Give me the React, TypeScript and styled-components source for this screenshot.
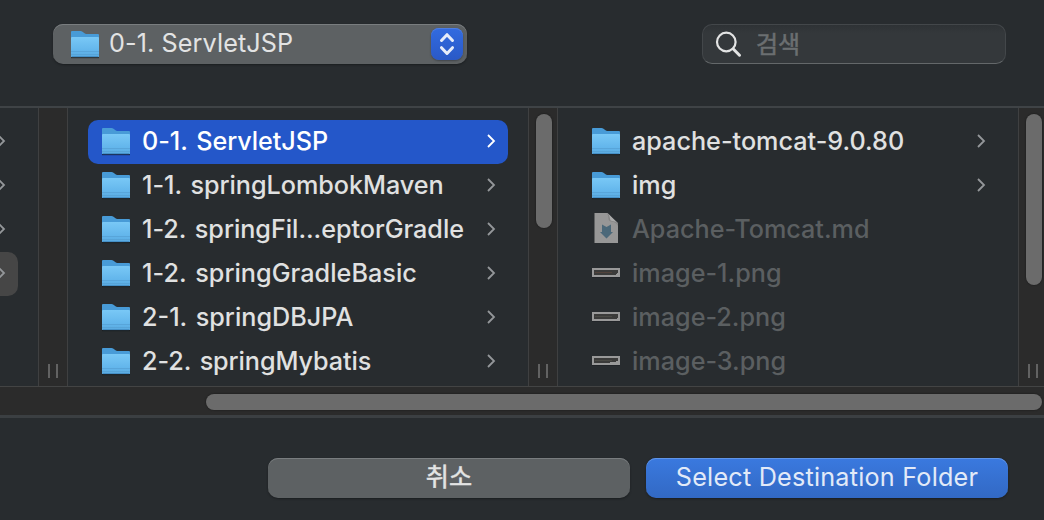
import React from "react";
import styled, { createGlobalStyle, css } from "styled-components";

const Global = createGlobalStyle`
  * { box-sizing: border-box; }
  body { margin: 0; background: #282c2f; overflow: hidden; }
`;

const Dialog = styled.main`
  width: 1044px;
  height: 520px;
  display: flex;
  flex-direction: column;
  background: #282c2f;
  color: #e0e1e1;
  font-family: Inter, "Noto Sans CJK KR", sans-serif;
  font-size: 25.2px;
  line-height: 40px;
  white-space: nowrap;
  overflow: hidden;
`;

const Header = styled.header`
  height: 108px;
  flex: none;
  display: flex;
  justify-content: space-between;
  align-items: flex-start;
  padding: 24px 38px 0 53px;
  border-bottom: 2px solid #3f4346;
`;

const PopupButton = styled.button`
  width: 414px;
  height: 40px;
  display: flex;
  align-items: center;
  padding: 0 4px 0 17px;
  border: 0;
  border-radius: 10px;
  background: #5d6163;
  box-shadow: inset 0 1px #797d7f, 0 1px 2px #1b1e20;
  color: #e2e3e3;
  font: inherit;
`;

const Stepper = styled.span`
  width: 32px;
  height: 32px;
  margin-left: auto;
  border-radius: 8px;
  background: linear-gradient(#326be0, #2a59c6);
  box-shadow: inset 0 1px #4d7de2, 0 1px 2px #414548;
  display: flex;
`;

const SearchField = styled.div`
  width: 304px;
  height: 40px;
  display: flex;
  align-items: center;
  padding-left: 12px;
  gap: 13px;
  border: 1px solid #43474a;
  border-bottom-color: #64686a;
  border-radius: 10px;
  background: linear-gradient(#2e3235, #34383b 8px);
  color: #6b6f71;
  font-size: 24px;
`;

const Browser = styled.section`
  height: 278px;
  flex: none;
  display: flex;
`;

const Column = styled.div<{ $width: number; $first?: boolean }>`
  width: ${(p) => p.$width}px;
  flex: none;
  padding: 12px 20px 0 ${(p) => (p.$first ? 0 : 20)}px;
`;

const Gutter = styled.div`
  width: 30px;
  flex: none;
  display: flex;
  flex-direction: column;
  align-items: center;
  padding: 6px 0 8px;
  background: #2b2b2b;
  border: solid #3f4041;
  border-width: 0 1px;
`;

const VerticalThumb = styled.div<{ $height: number }>`
  width: 16px;
  height: ${(p) => p.$height}px;
  margin-left: 2px;
  border-radius: 8px;
  background: #6b6b6b;
  box-shadow: 0 0 1px 1px #242424;
`;

const Grip = styled.div`
  width: 10px;
  height: 14px;
  margin-top: auto;
  border: solid #626262;
  border-width: 0 2px;
`;

const Row = styled.div<{ $selected?: boolean; $dim?: boolean }>`
  height: 44px;
  display: flex;
  align-items: center;
  padding: 0 12px 0 13px;
  border-radius: 10px;
  font-weight: 500;
  word-spacing: 2px;
  ${(p) =>
    p.$selected &&
    css`
      background: #2457c9;
      color: #fff;
    `}
  ${(p) => p.$dim && css`color: #5b5f61;`}
`;

const ParentRow = styled.div<{ $active?: boolean }>`
  width: 18px;
  height: 44px;
  display: flex;
  align-items: center;
  padding-bottom: 2px;
  border-radius: 0 10px 10px 0;
  background: ${(p) => (p.$active ? "#464646" : "transparent")};
`;

const IconSlot = styled.span<{ $lowered?: boolean }>`
  width: 30px;
  height: 44px;
  margin-right: 11px;
  flex: none;
  display: flex;
  ${(p) =>
    p.$lowered &&
    css`
      margin-top: 2px;
      margin-right: 9px;
    `}
`;

const Label = styled.span<{ $spacing?: number; $weight?: number }>`
  padding-bottom: 2px;
  letter-spacing: ${(p) => p.$spacing ?? 0}px;
  font-weight: ${(p) => p.$weight ?? "inherit"};
`;

const KoreanLabel = styled(Label)`
  -webkit-text-stroke: 0.5px currentColor;
`;

const Placeholder = styled(KoreanLabel)`
  padding: 2px 0 0;
`;

const ChevronIcon = styled.svg<{ $selected?: boolean }>`
  width: 10px;
  height: 16px;
  margin-left: auto;
  margin-bottom: 2px;
  flex: none;
  fill: none;
  stroke: ${(p) => (p.$selected ? "#fff" : "#94979a")};
  stroke-width: 1.8;
`;

const HorizontalTrack = styled.div`
  height: 32px;
  flex: none;
  display: flex;
  justify-content: flex-end;
  padding: 7px 2px 0;
  background: #2b2b2b;
  border-top: 1px solid #434444;
  border-bottom: 3px solid #3b3f42;
`;

const HorizontalThumb = styled.div`
  width: 836px;
  height: 16px;
  border-radius: 8px;
  background: #6b6b6b;
  box-shadow: 0 0 1px 1px #242424;
`;

const Footer = styled.footer`
  display: flex;
  justify-content: flex-end;
  gap: 16px;
  padding: 40px 36px 0 0;
`;

const ActionButton = styled.button<{ $primary?: boolean }>`
  width: 362px;
  height: 40px;
  display: flex;
  align-items: center;
  justify-content: center;
  padding: 0;
  border: 0;
  border-radius: 10px;
  font: inherit;
  color: ${(p) => (p.$primary ? "#e2eaf8" : "#e3e4e4")};
  background: ${(p) => (p.$primary ? "linear-gradient(#3a79df, #3269c4)" : "#5d6163")};
  box-shadow: inset 0 1px ${(p) => (p.$primary ? "#6095e8" : "#797d7f")}, 0 1px 2px #1b1e20;
`;

function Folder() {
  return (
    <svg width="30" height="44" viewBox="0 0 30 44">
      <defs>
        <linearGradient id="folderFront" x1="0" y1="0" x2="0" y2="1">
          <stop offset="0" stopColor="#79c8f6" />
          <stop offset="0.7" stopColor="#62b5eb" />
          <stop offset="1" stopColor="#5aaae0" />
        </linearGradient>
      </defs>
      <path d="M1 34h28v1.2H1z" fill="#15191c" opacity=".65" />
      <path d="M1 9q0-1 1-1h8.500q1 0 2 .8l2 1.500q.8.7 1.800.7H28q1 0 1 1v21q0 1-1 1H2q-1 0-1-1z" fill="#489bd7" />
      <path d="M1 15q0-1 1-1h26q1 0 1 1v18q0 1-1 1H2q-1 0-1-1z" fill="url(#folderFront)" />
      <path d="M1 28.500h28M1 31.500h28" stroke="#549fd2" strokeWidth=".7" />
      <path d="M2 33.600h26" stroke="#3d86bb" strokeWidth=".8" />
    </svg>
  );
}

function MarkdownFile() {
  return (
    <svg width="30" height="44" viewBox="0 0 30 44">
      <path d="M3.500 5h13L27 15.500V35H3.500z" fill="#979797" />
      <path d="M15.500 5q2 1.500 2 5.500 0 3 3 3 4 0 6.500 4.500v-3z" fill="#858585" />
      <path d="M16.500 5L27 15.500q-2-2.500-5.500-2.500-2.500 0-2.500-2.500 0-3.500-2.500-5.500z" fill="#aaa" />
      <path d="M11 16.500l4.500 2.500 4.500-2.500v7.500h2l-6.500 6.500L9 24h2z" fill="#4b6879" />
    </svg>
  );
}

function ImageFile({ variant }: { variant: number }) {
  return (
    <svg width="30" height="44" viewBox="0 0 30 44">
      <path d="M1 16h28v10H1z" fill="#1b1f22" opacity=".55" />
      <path d="M1 16h28v9H1z" fill="#999" />
      <path d="M3 18h24v5H3z" fill="#3b3b3a" />
      <path d="M4 20.500h17" stroke={variant === 1 ? "#51423b" : "#4a4a45"} strokeWidth="1" />
      {variant === 1 && <path d="M25 22h1v-1h1v2h-2z" fill="#999" />}
      {variant === 2 && <path d="M26 22h1v1h-1z" fill="#999" />}
      {variant === 3 && <path d="M19 22h6v-1h2v2h-8z" fill="#999" />}
    </svg>
  );
}

function Chevron({ selected }: { selected?: boolean }) {
  return (
    <ChevronIcon $selected={selected} viewBox="0 0 10 16">
      <path d="M2 2l6 6-6 6" />
    </ChevronIcon>
  );
}

const projects = [
  { name: "0-1. ServletJSP", spacing: -0.05 },
  { name: "1-1. springLombokMaven", spacing: -0.04 },
  { name: "1-2. springFil...eptorGradle", spacing: -0.03 },
  { name: "1-2. springGradleBasic", spacing: 0.04 },
  { name: "2-1. springDBJPA", spacing: 0 },
  { name: "2-2. springMybatis", spacing: -0.08 },
];

const files = [
  { name: "apache-tomcat-9.0.80", icon: <Folder />, folder: true },
  { name: "img", icon: <Folder />, folder: true },
  { name: "Apache-Tomcat.md", icon: <MarkdownFile /> },
  { name: "image-1.png", icon: <ImageFile variant={1} /> },
  { name: "image-2.png", icon: <ImageFile variant={2} /> },
  { name: "image-3.png", icon: <ImageFile variant={3} /> },
];

export default function App() {
  return (
    <>
      <Global />
      <Dialog>
        <Header>
          <PopupButton>
            <IconSlot $lowered>
              <Folder />
            </IconSlot>
            <Label $weight={430} $spacing={0.1}>0-1. ServletJSP</Label>
            <Stepper>
              <svg width="32" height="32" viewBox="0 0 32 32" fill="none" stroke="#e6ecf9" strokeWidth="3" strokeLinecap="round" strokeLinejoin="round">
                <path d="M10.500 12.500L16 6.700l5.500 5.800M10.500 19.700L16 25.500l5.500-5.800" />
              </svg>
            </Stepper>
          </PopupButton>
          <SearchField>
            <svg width="28" height="28" viewBox="0 0 28 28" fill="none" stroke="#e3e4e4" strokeLinecap="round">
              <circle cx="11.300" cy="12" r="9.300" strokeWidth="2.200" />
              <path d="M18.300 19l6.200 6.200" strokeWidth="3" />
            </svg>
            <Placeholder>검색</Placeholder>
          </SearchField>
        </Header>
        <Browser>
          <Column $width={38} $first>
            {[0, 1, 2, 3].map((i) => (
              <ParentRow key={i} $active={i === 3}>
                <svg width="8" height="16" viewBox="0 0 8 16" fill="none" stroke="#94979a" strokeWidth="1.800">
                  <path d="M-2 2l6 6-6 6" />
                </svg>
              </ParentRow>
            ))}
          </Column>
          <Gutter>
            <Grip />
          </Gutter>
          <Column $width={460}>
            {projects.map((p, i) => (
              <Row key={p.name} $selected={i === 0}>
                <IconSlot>
                  <Folder />
                </IconSlot>
                <Label $spacing={p.spacing}>{p.name}</Label>
                <Chevron selected={i === 0} />
              </Row>
            ))}
          </Column>
          <Gutter>
            <VerticalThumb $height={114} />
            <Grip />
          </Gutter>
          <Column $width={460}>
            {files.map((f) => (
              <Row key={f.name} $dim={!f.folder}>
                <IconSlot>{f.icon}</IconSlot>
                <Label>{f.name}</Label>
                {f.folder && <Chevron />}
              </Row>
            ))}
          </Column>
          <Gutter>
            <VerticalThumb $height={171} />
            <Grip />
          </Gutter>
        </Browser>
        <HorizontalTrack>
          <HorizontalThumb />
        </HorizontalTrack>
        <Footer>
          <ActionButton>
            <KoreanLabel>취소</KoreanLabel>
          </ActionButton>
          <ActionButton $primary>
            <Label $weight={430} $spacing={0.22}>Select Destination Folder</Label>
          </ActionButton>
        </Footer>
      </Dialog>
    </>
  );
}
